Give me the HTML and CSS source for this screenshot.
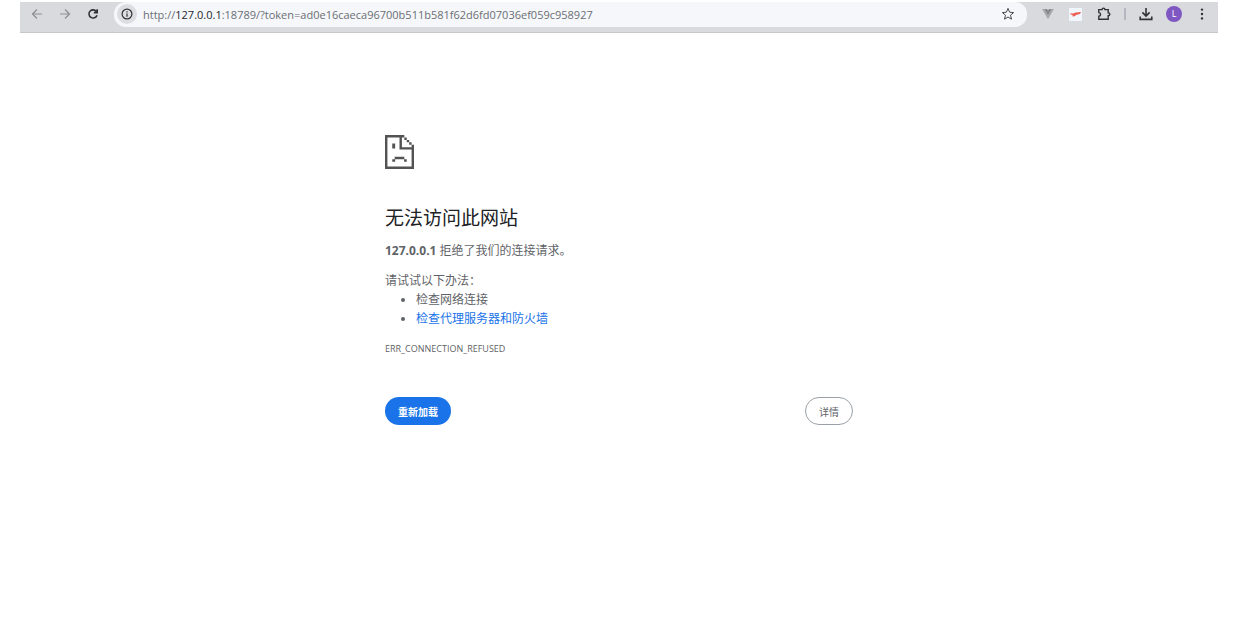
FILE: index.html
```
<!DOCTYPE html>
<html lang="zh">
<head>
  <meta charset="UTF-8">
  <meta name="viewport" content="width=device-width, initial-scale=1.0">
  <title>127.0.0.1</title>
  <link rel="stylesheet" href="styles.css">
</head>
<body>
  <header class="toolbar">
    <nav class="nav-buttons">
      <button type="button" class="icon-btn" aria-label="后退" disabled>
        <svg width="12" height="12" viewBox="0 0 12 12"><path d="M11 6H1.5M6 1.5L1.5 6L6 10.5"/></svg>
      </button>
      <button type="button" class="icon-btn" aria-label="前进" disabled>
        <svg width="12" height="12" viewBox="0 0 12 12"><path d="M1 6H10.5M6 1.5L10.5 6L6 10.5"/></svg>
      </button>
      <button type="button" class="icon-btn" aria-label="刷新">
        <svg class="bold" width="12" height="12" viewBox="0 0 12 12"><path d="M9.6 3.8A4.1 4.1 0 1 0 10 7.2M10.2 1.2V4.6H6.8"/></svg>
      </button>
    </nav>

    <div class="omnibox">
      <button type="button" class="site-info" aria-label="网站信息">
        <svg width="12" height="12" viewBox="0 0 12 12"><circle cx="6" cy="6" r="4.9"/><path d="M6 5.4V8.8M6 3.2V4.4"/></svg>
      </button>
      <div class="url">http://<span class="host">127.0.0.1</span>:18789/?token=ad0e16caeca96700b511b581f62d6fd07036ef059c958927</div>
      <button type="button" class="star-btn" aria-label="添加书签">
        <svg width="14" height="14" viewBox="0 0 14 14"><path d="M7 1.4L8.6 5.2L12.6 5.6L9.5 8.2L10.5 12.2L7 10L3.5 12.2L4.5 8.2L1.4 5.6L5.4 5.2Z"/></svg>
      </button>
    </div>

    <div class="actions">
      <button type="button" class="icon-btn" aria-label="Vue">
        <svg width="14" height="12" viewBox="0 0 14 12"><path class="vue-outer" d="M1 1H4.2L7 5.8L9.8 1H13L7 11.2Z"/><path class="vue-inner" d="M3.6 1H6L7 2.6L8 1H10.4L7 7Z"/></svg>
      </button>
      <button type="button" class="icon-btn" aria-label="扩展">
        <svg width="14" height="14" viewBox="0 0 14 14"><rect class="ext-bg" x="0" y="1" width="13" height="13"/><path class="ext-mark" d="M1.2 6.2L4 6.6L7 5.4L12.2 5L10.8 7L7.6 7.8L5 9.6L3.4 9.2L3.6 7.8L1.6 7.6Z"/></svg>
      </button>
      <button type="button" class="icon-btn" aria-label="扩展程序">
        <svg class="medium" width="14" height="14" viewBox="0 0 14 14"><path d="M1.8 2.6H5.1C5.1 .6 7.9 .6 7.9 2.6H11.2V5.9C13.4 5.9 13.4 8.7 11.2 8.7V12.2H1.8V9.2C4.2 9 4.2 5.8 1.8 5.6Z"/></svg>
      </button>
      <span class="divider"></span>
      <button type="button" class="icon-btn" aria-label="下载">
        <svg class="bold" width="14" height="14" viewBox="0 0 14 14"><path d="M7 1V8.8M3.4 5.4L7 9L10.6 5.4M1.2 9.6V12.4H12.8V9.6"/></svg>
      </button>
      <button type="button" class="avatar">L</button>
      <button type="button" class="icon-btn" aria-label="菜单">
        <svg class="dots" width="12" height="14" viewBox="0 0 12 14"><circle cx="6" cy="2.6" r="1.2"/><circle cx="6" cy="7" r="1.2"/><circle cx="6" cy="11.4" r="1.2"/></svg>
      </button>
    </div>
  </header>

  <main class="error-page">
    <svg class="error-icon" width="29" height="34" viewBox="0 0 12 14">
      <path d="M0 0H8V1H9V2H10V3H11V4H12V14H0ZM1 1V13H11V6H6V1ZM7 1V5H11V4H10V3H9V2H8V1Z" fill-rule="evenodd"/>
      <path d="M3 3.5H4.2V5.5H3ZM4 9H8V10H4ZM3 10H4.2V11H3ZM7.9 10H9V11H7.9Z"/>
    </svg>
    <h1>无法访问此网站</h1>
    <p><strong>127.0.0.1</strong> 拒绝了我们的连接请求。</p>
    <div class="suggestions">
      <p>请试试以下办法：</p>
      <ul>
        <li>检查网络连接</li>
        <li><a href="#buttons">检查代理服务器和防火墙</a></li>
      </ul>
    </div>
    <div class="error-code">ERR_CONNECTION_REFUSED</div>
    <div id="buttons" class="buttons">
      <button type="button" class="btn btn-primary">重新加载</button>
      <button type="button" class="btn btn-secondary">详情</button>
    </div>
  </main>
</body>
</html>
```
FILE: styles.css
```
/* 基本样式 */
* { box-sizing: border-box; }
body { margin: 0; padding: 2px 39px 0 20px; background: #fff; color: #5f6368; font-family: "Open Sans", "Noto Sans CJK SC", sans-serif; font-size: 12px; line-height: 19px; }
button { padding: 0; border: none; background: none; font-family: inherit; cursor: pointer; }
h1, p, ul { margin: 0; }

/* 浏览器工具栏 */
.toolbar { display: flex; align-items: flex-start; height: 31px; padding-left: 8px; background: #d9dade; border-bottom: 1px solid #c6c7ca; }
.toolbar svg { display: block; fill: none; stroke: #303236; stroke-width: 1.2; }
.toolbar svg.medium { stroke-width: 1.4; }
.toolbar svg.bold { stroke-width: 1.6; }
.toolbar .star-btn svg { stroke: #47494d; stroke-width: 1; }
.nav-buttons { display: flex; gap: 10px; }
.icon-btn { display: flex; align-items: center; justify-content: center; width: 18px; height: 24px; }
.toolbar .icon-btn:disabled svg { stroke: #8c8e92; }

/* 地址栏 */
.omnibox { display: flex; flex: 1; align-items: center; height: 25px; margin-left: 12px; padding: 0 12px 1px 3px; background: #f5f7fa; border-radius: 12px; }
.site-info { display: flex; align-items: center; justify-content: center; width: 20px; height: 20px; background: #dcdee2; border-radius: 50%; }
.url { flex: 1; margin-left: 6px; color: #6b6e73; font-size: 11px; white-space: nowrap; overflow: hidden; }
.host { color: #25272b; }

/* 右侧图标 */
.actions { display: flex; align-items: center; gap: 10px; height: 24px; padding: 0 7px 0 12px; }
.divider { width: 2px; height: 12px; margin: 0 1px; background: #b4b6c0; }
.avatar { width: 16px; height: 16px; margin: 0 1px; background: #7e57c2; color: #fff; border-radius: 50%; font-size: 9px; line-height: 16px; }
.toolbar .vue-outer { fill: #a9aaab; stroke: none; }
.toolbar .vue-inner { fill: #858688; stroke: none; }
.toolbar .ext-bg { fill: #f1f5fc; stroke: none; }
.toolbar .ext-mark { fill: #ee5b4f; stroke: none; }
.toolbar .dots { fill: #303236; stroke: none; }

/* 错误页面 */
.error-page { width: 100%; max-width: 468px; margin: 0 auto; padding-top: 102px; }
.error-icon { display: block; fill: #535353; }
h1 { margin: 35px 0 9px; color: #202124; font-size: 19px; font-weight: 400; line-height: 28px; }
.suggestions { margin-top: 11px; }
ul { padding-left: 31px; }
a { color: #1a73e8; text-decoration: none; }
.error-code { margin-top: 11px; font-size: 9px; }

/* 按钮 */
.buttons { display: flex; justify-content: space-between; margin-top: 39px; }
.btn { height: 28px; padding: 0 13px; border-radius: 14px; font-size: 10px; font-weight: 400; }
.btn-primary { background: #1a73e8; color: #fff; font-weight: 700; }
.btn-secondary { border: 1px solid #9aa0a6; color: #5f6368; }
```
